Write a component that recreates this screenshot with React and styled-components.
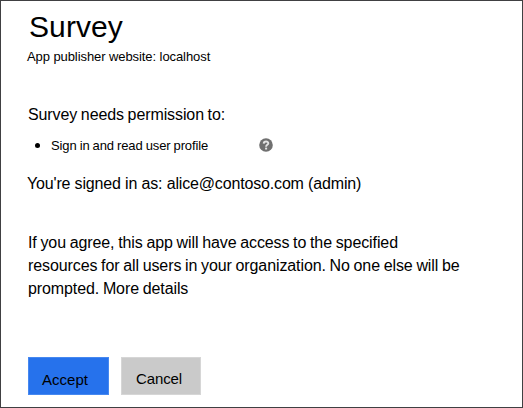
import React from "react";
import styled, { createGlobalStyle } from "styled-components";

const GlobalStyle = createGlobalStyle`
  *, *::before, *::after { box-sizing: border-box; }
  body { margin: 0; background: #fff; }
`;

const Dialog = styled.main`
  width: 523px;
  height: 408px;
  padding: 9px 27px 0 26px;
  border: 1px solid #404042;
  background: #fff;
  color: #000;
  font: 16px/23px "Liberation Sans", Arial, sans-serif;
  white-space: nowrap;
  overflow: hidden;
`;

const Title = styled.h1`
  margin: 0 0 0 2px;
  font-size: 30px;
  line-height: 34px;
  font-weight: 400;
  letter-spacing: 0.1px;
`;

const Publisher = styled.p`
  margin: 4px 0 0;
  font-size: 13px;
  line-height: 18px;
`;

const Heading = styled.h2`
  margin: 37px 0 0 1px;
  font-size: 16px;
  line-height: 23px;
  font-weight: 400;
`;

const Permissions = styled.ul`
  margin: 9px 0 0;
  padding: 0;
  list-style: none;
`;

const Permission = styled.li`
  display: flex;
  align-items: center;
  height: 20px;
  padding-left: 8px;
  font-size: 13px;
`;

const Bullet = styled.span`
  width: 5px;
  height: 5px;
  margin-right: 11px;
  border-radius: 50%;
  background: #000;
`;

const PermissionName = styled.span`
  width: 208px;
`;

const HelpIcon = styled.svg`
  width: 14px;
  height: 14px;
`;

const Account = styled.p`
  margin: 17px 0 0;
`;

const Notice = styled.p`
  margin: 36px 0 0 1px;
`;

const Line = styled.span`
  display: block;
  letter-spacing: ${(p) => p.$tracking ?? -0.1}px;
  word-spacing: ${(p) => p.$gap ?? -0.6}px;
`;

const Actions = styled.div`
  display: flex;
  gap: 12px;
  margin: 57px 0 0 1px;
`;

const Button = styled.button`
  width: ${(p) => (p.$primary ? 81 : 80)}px;
  height: 38px;
  padding: ${(p) => (p.$primary ? "7px 7px 0 0" : "5px 4px 0 0")};
  border: 1px solid ${(p) => (p.$primary ? "#4688f0" : "#d6d6d6")};
  background: ${(p) => (p.$primary ? "#2672ec" : "#cacaca")};
  color: #000;
  font: 15px/20px "Liberation Sans", Arial, sans-serif;
  letter-spacing: ${(p) => (p.$primary ? 0 : -0.1)}px;
`;

export default function App() {
  return (
    <>
      <GlobalStyle />
      <Dialog>
        <Title>Survey</Title>
        <Publisher><Line $tracking={-0.08} $gap={0}>App publisher website: localhost</Line></Publisher>
        <Heading><Line $gap={-0.7}>Survey needs permission to:</Line></Heading>
        <Permissions>
          <Permission>
            <Bullet />
            <PermissionName><Line $tracking={-0.12} $gap={-0.4}>Sign in and read user profile</Line></PermissionName>
            <HelpIcon viewBox="0 0 14 14" role="img" aria-label="Help">
              <circle cx="7" cy="7" r="6.8" fill="#707070" />
              <path d="M4.7 5.6C4.8 2.9 9.4 2.9 9.3 5.5C9.2 6.9 7.1 6.8 7.1 8.7" fill="none" stroke="#e4e4e4" strokeWidth="1.9" />
              <rect x="6.1" y="9.6" width="2" height="1.9" fill="#e4e4e4" />
            </HelpIcon>
          </Permission>
        </Permissions>
        <Account><Line $tracking={-0.16} $gap={0}>You're signed in as: alice@contoso.com (admin)</Line></Account>
        <Notice>
          <Line>If you agree, this app will have access to the specified</Line>
          <Line>resources for all users in your organization. No one else will be</Line>
          <Line>prompted. More details</Line>
        </Notice>
        <Actions>
          <Button type="button" $primary>Accept</Button>
          <Button type="button">Cancel</Button>
        </Actions>
      </Dialog>
    </>
  );
}
